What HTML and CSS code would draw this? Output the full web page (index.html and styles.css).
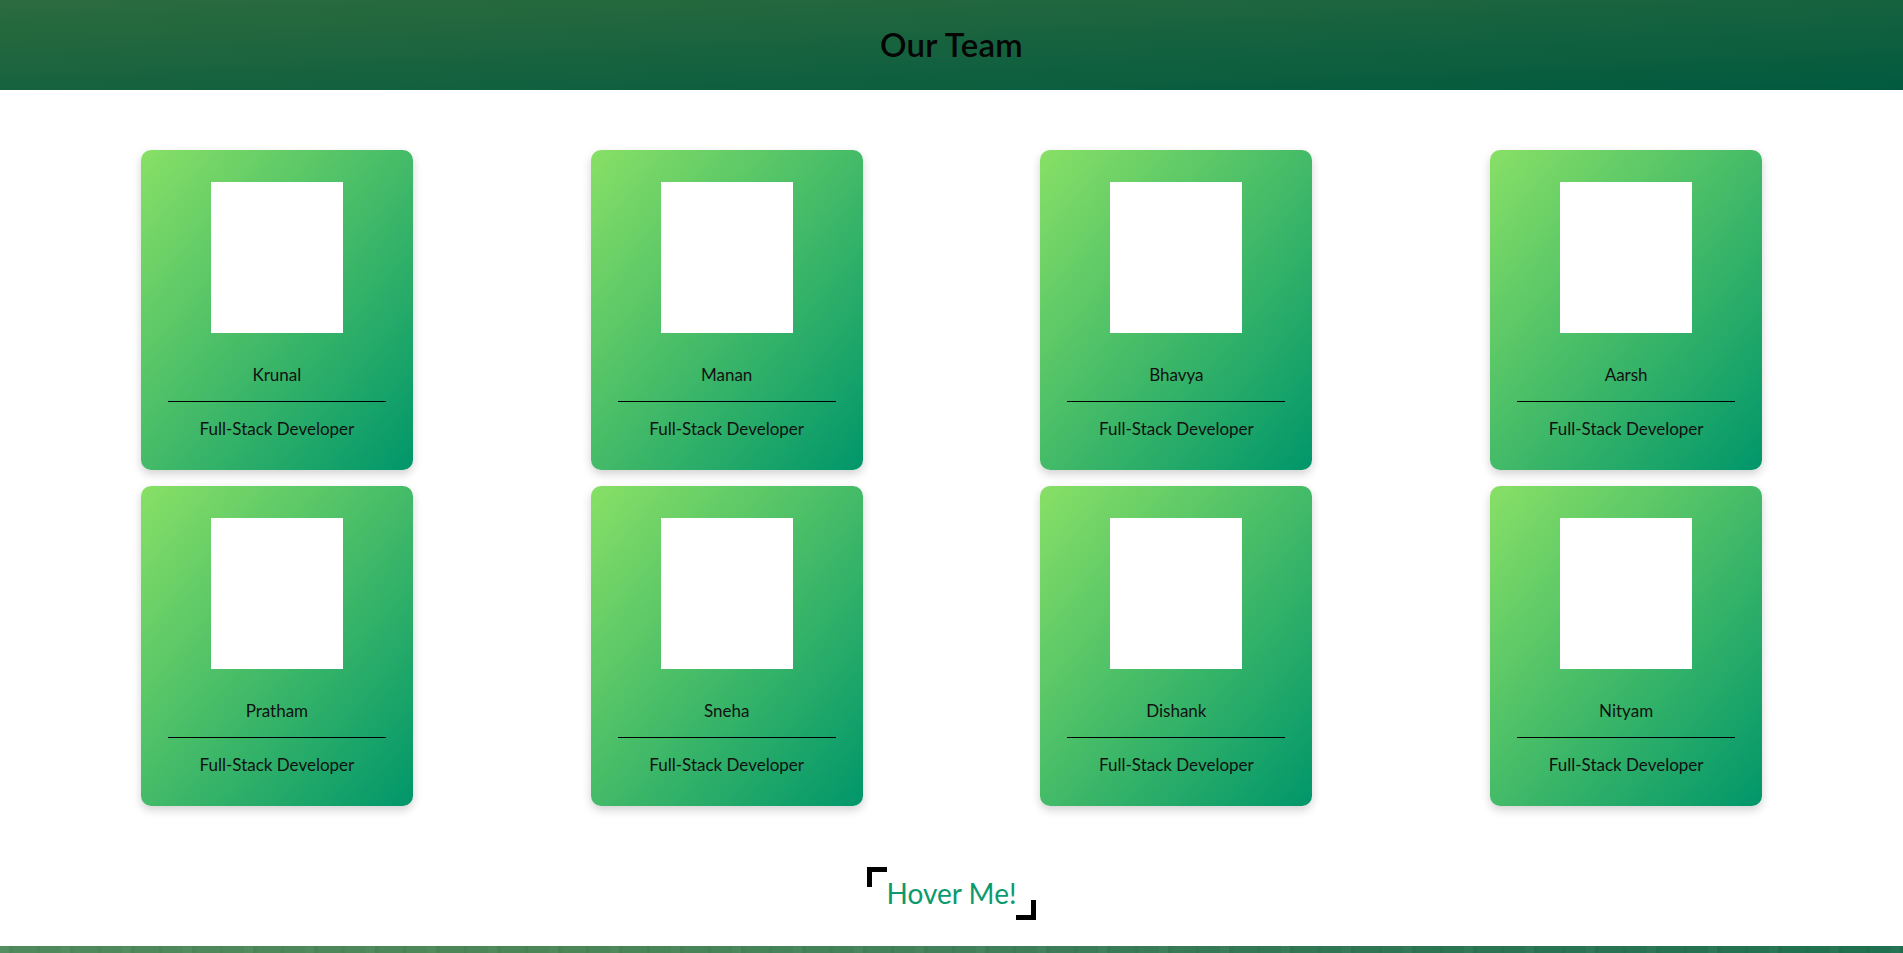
FILE: index.html
```html
<!DOCTYPE html>
<html lang="en">
<head>
<meta charset="utf-8">
<title>Our Team</title>
<link rel="stylesheet" href="styles.css">
</head>
<body>
<header class="top">
  <h1 class="title">Our Team</h1>
</header>
<main class="team">
  <div class="card"><div class="photo"></div><p class="name">Krunal</p><hr class="rule"><p class="role">Full-Stack Developer</p></div>
  <div class="card"><div class="photo"></div><p class="name">Manan</p><hr class="rule"><p class="role">Full-Stack Developer</p></div>
  <div class="card"><div class="photo"></div><p class="name">Bhavya</p><hr class="rule"><p class="role">Full-Stack Developer</p></div>
  <div class="card"><div class="photo"></div><p class="name">Aarsh</p><hr class="rule"><p class="role">Full-Stack Developer</p></div>
  <div class="card"><div class="photo"></div><p class="name">Pratham</p><hr class="rule"><p class="role">Full-Stack Developer</p></div>
  <div class="card"><div class="photo"></div><p class="name">Sneha</p><hr class="rule"><p class="role">Full-Stack Developer</p></div>
  <div class="card"><div class="photo"></div><p class="name">Dishank</p><hr class="rule"><p class="role">Full-Stack Developer</p></div>
  <div class="card"><div class="photo"></div><p class="name">Nityam</p><hr class="rule"><p class="role">Full-Stack Developer</p></div>
</main>
<div class="hover-wrap">
  <a class="hover-btn">Hover Me!</a>
</div>
<footer class="foot"></footer>
</body>
</html>
```
FILE: styles.css
```css
* { box-sizing: border-box; }
html, body { margin: 0; padding: 0; }
body {
  font-family: Lato, "Open Sans", sans-serif;
  background: #ffffff;
  color: #111;
}
.top {
  height: 90px;
  background: linear-gradient(to bottom right, #2c6b3e, #015a3f);
  display: flex;
  align-items: center;
  justify-content: center;
}
.title {
  margin: 0;
  font-size: 33px;
  font-weight: 600;
  color: #050505;
  line-height: 40px;
  padding-bottom: 2px;
  letter-spacing: 0.3px;
}
.team {
  display: grid;
  grid-template-columns: repeat(4, 1fr);
  justify-items: center;
  row-gap: 16px;
  padding: 0 52px;
  margin-top: 60px;
}
.card {
  width: 272px;
  height: 320px;
  border-radius: 10px;
  background: linear-gradient(to bottom right, #88e066, #00966a);
  box-shadow: 0 4px 10px rgba(0, 0, 0, 0.18);
  padding: 32px 27px 0;
  display: flex;
  flex-direction: column;
  align-items: center;
}
.photo {
  width: 132px;
  height: 151px;
  background: #fff;
  flex: none;
}
.name, .role {
  margin: 0;
  font-size: 17px;
  line-height: 24px;
  color: #111;
  text-align: center;
}
.name { margin-top: 30px; }
.rule {
  width: 100%;
  margin: 14px 0 0;
  border: 0;
  height: 1px;
  background: #000;
}
.role { margin-top: 15px; }
.hover-wrap {
  display: flex;
  justify-content: center;
  margin-top: 61px;
}
.hover-btn {
  position: relative;
  display: block;
  width: 169px;
  height: 53px;
  line-height: 53px;
  text-align: center;
  font-size: 28px;
  color: #0a9a6e;
  cursor: pointer;
}
.hover-btn::before, .hover-btn::after {
  content: "";
  position: absolute;
  width: 15px;
  height: 15px;
  border: 0 solid #000;
}
.hover-btn::before {
  left: 0;
  top: 0;
  border-top-width: 5px;
  border-left-width: 5px;
}
.hover-btn::after {
  right: 0;
  bottom: 0;
  border-bottom-width: 5px;
  border-right-width: 5px;
}
.foot {
  margin-top: 26px;
  height: 120px;
  background:
    repeating-linear-gradient(90deg, rgba(255,255,255,0.03) 0 9px, rgba(0,0,0,0.03) 9px 13px, rgba(255,255,255,0) 13px 37px, rgba(0,0,0,0.04) 37px 40px, rgba(255,255,255,0) 40px 61px),
    linear-gradient(90deg, #4e8a5c 0%, #4a8656 30%, #41805a 50%, #2f7654 70%, #1f7050 100%);
}
```
